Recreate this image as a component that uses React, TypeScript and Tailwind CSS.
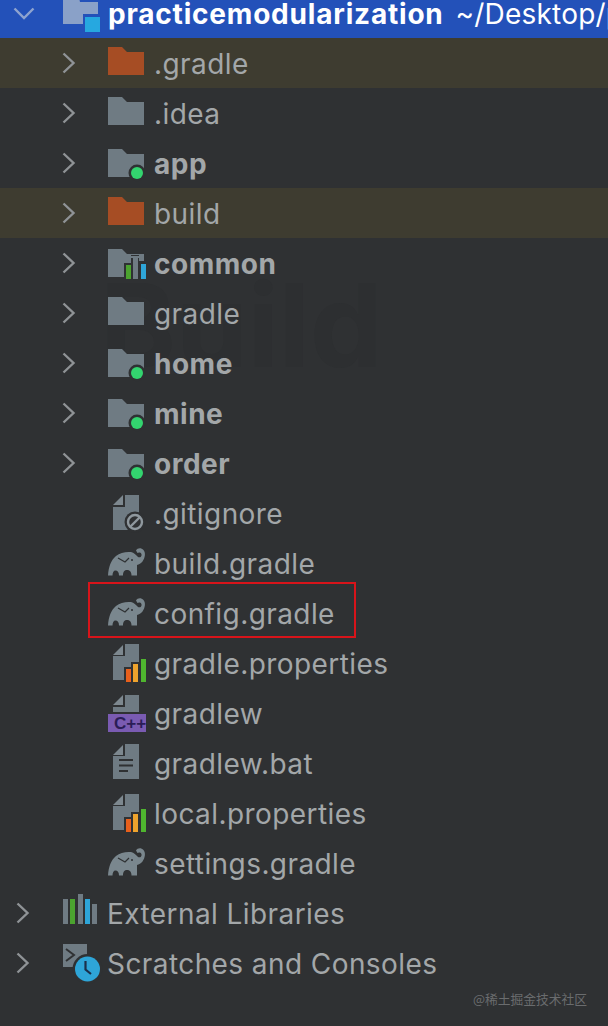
import React from "react";

const SLATE = "#6f7b83";
const BG = "#2f3133";

type Icon = React.ReactNode;

function Svg({ children }: { children: React.ReactNode }) {
  return (
    <svg width="40" height="40" viewBox="0 0 40 40" className="shrink-0 overflow-visible">
      {children}
    </svg>
  );
}

function folderPath(y: number) {
  return `M2 ${y}H16L21 ${y + 5}H38V${y + 28}H2Z`;
}

const ModuleDot = () => (
  <>
    <circle cx="31" cy="30" r="8.5" fill={BG} />
    <circle cx="31" cy="30" r="6" fill="#33d46f" />
  </>
);

const Folder = ({ color = SLATE }: { color?: string }) => (
  <Svg>
    <path d={folderPath(4)} fill={color} />
  </Svg>
);

const ModuleFolder = () => (
  <Svg>
    <path d={folderPath(6)} fill={SLATE} />
    <ModuleDot />
  </Svg>
);

const ChartFolder = () => (
  <Svg>
    <path d={folderPath(6)} fill={SLATE} />
    <path d="M18 38V20H25V12H33V18H41V38Z" fill={BG} />
    <path d="M25 13H33V15H25Z" fill={SLATE} />
    <rect x="20" y="22" width="5" height="14" fill="#4ba32f" />
    <rect x="27" y="15" width="5" height="21" fill={SLATE} />
    <rect x="35" y="21" width="5" height="15" fill="#2ea5d8" />
  </Svg>
);

const filePath = "M19 2H33V37H7V14H19Z";

const FileBase = ({ d = filePath }: { d?: string }) => (
  <>
    <path d="M7 12L17 2V12Z" fill="#7d888f" />
    <path d={d} fill={SLATE} />
  </>
);

const GitIgnore = () => (
  <Svg>
    <FileBase />
    <circle cx="29" cy="29" r="10.5" fill={BG} />
    <circle cx="29" cy="29" r="7" fill="none" stroke="#8f989e" strokeWidth="2.4" />
    <path d="M24.5 33.5L33.5 24.5" stroke="#8f989e" strokeWidth="2.4" />
  </Svg>
);

const Elephant = () => (
  <Svg>
    <path
      d="M2 32.500C2.500 24 5 17 10 13C14 9.500 20 8.500 25 9C28 9.500 30 12 31.500 13.500C33 15 35 14.500 35.500 12.500C36 10.500 34.500 9 33 9.500L31.500 10L30 7.500C31.500 5 35 4.500 37.500 7C40 10 39 15 36.500 18.500C35 20.500 33 21.500 31 22V32.500H25.500C25.500 28.500 23.500 27 21 27C18.500 27 17 28.500 17 32.500H13C13 29 11.500 27.500 9.500 27.500C7.500 27.500 6.500 29.500 6.500 32.500Z"
      fill="#7a878e"
    />
    <path d="M12 15L19 19L23 15" fill="none" stroke={BG} strokeWidth="1.2" />
    <circle cx="26" cy="17" r="1" fill={BG} />
  </Svg>
);

const Properties = () => (
  <Svg>
    <FileBase d="M19 1H33V37H7V13H19Z" />
    <path d="M18 41V24H25V19H33V14H41V41Z" fill={BG} />
    <rect x="20" y="26" width="5" height="13" fill="#e8601c" />
    <rect x="27" y="21" width="5" height="18" fill="#eea32d" />
    <rect x="35" y="16" width="5" height="23" fill="#4fb52f" />
  </Svg>
);

const CppFile = () => (
  <Svg>
    <path d="M7 12L17 2V12Z" fill="#7d888f" />
    <path d="M19 2H33V19H7V14H19Z" fill={SLATE} />
    <rect x="2" y="21" width="38" height="18" fill="#7a5bb2" />
    <text
      x="8"
      y="36"
      fontFamily="'Liberation Sans', sans-serif"
      fontWeight="700"
      fontSize="17"
      fill="#2a1d57"
    >
      C++
    </text>
  </Svg>
);

const TextFile = () => (
  <Svg>
    <FileBase d="M19 1H33V36H7V13H19Z" />
    <rect x="13" y="16" width="14" height="2" fill={BG} />
    <rect x="13" y="21.500" width="14" height="2" fill={BG} />
    <rect x="13" y="27" width="9" height="2" fill={BG} />
  </Svg>
);

const Libraries = () => (
  <Svg>
    <rect x="3" y="6" width="5" height="25" fill={SLATE} />
    <rect x="10" y="6" width="5" height="25" fill="#4ba32f" />
    <rect x="18" y="1" width="5" height="30" fill={SLATE} />
    <rect x="25" y="6" width="5" height="25" fill="#2ea5d8" />
    <rect x="32" y="11" width="5" height="20" fill={SLATE} />
  </Svg>
);

const Scratches = () => (
  <Svg>
    <rect x="3" y="1" width="24" height="23" fill={SLATE} />
    <path d="M6 6L14 12L6 18" fill="none" stroke={BG} strokeWidth="2" />
    <circle cx="27.500" cy="26" r="15" fill={BG} />
    <circle cx="27.500" cy="26" r="12.500" fill="#2ea5d8" />
    <path d="M25.500 18V26.500L31 31" fill="none" stroke="#1c2f4a" strokeWidth="2.200" />
  </Svg>
);

const Chevron = () => (
  <svg width="14" height="22" viewBox="0 0 14 22" className="shrink-0">
    <path d="M1.500 1.500L11.500 11L1.500 20.500" fill="none" stroke="#8f9396" strokeWidth="2.400" />
  </svg>
);

interface RowProps {
  icon: Icon;
  label: string;
  bold?: boolean;
  tinted?: boolean;
  hasChevron?: boolean;
  outer?: boolean;
  boxed?: boolean;
}

function Row({ icon, label, bold, tinted, hasChevron = true, outer, boxed }: RowProps) {
  return (
    <div
      className={`relative flex h-[50px] items-center ${outer ? "pl-[16px]" : "pl-[62px]"} ${
        tinted ? "bg-[#3e3c30]" : ""
      }`}
    >
      <div className="flex w-[44px] shrink-0 items-center">{hasChevron && <Chevron />}</div>
      {icon}
      <span
        className={`whitespace-nowrap pt-[2px] text-[28px] leading-none ${outer ? "ml-[7px]" : "ml-[8px]"} ${
          bold ? "font-bold tracking-[0.5px]" : "font-normal tracking-[0.42px]"
        }`}
      >
        {label}
      </span>
      {boxed && (
        <div className="absolute left-[88px] top-[-6px] h-[56px] w-[268px] border-2 border-[#d8141a]" />
      )}
    </div>
  );
}

export default function App() {
  return (
    <div className="relative h-[1026px] w-[608px] overflow-hidden bg-[#2f3133] font-['Inter',sans-serif] text-[#a3a7a9]">
      {/* ghost drag label left behind in the tree */}
      <span className="absolute left-[100px] top-[268px] whitespace-nowrap text-[115px] font-bold leading-none text-[#2d2f31]">
        Build
      </span>

      <div className="relative flex h-[38px] items-end overflow-hidden bg-[#2351b9] text-white">
        <div className="flex h-[50px] shrink-0 items-center whitespace-nowrap pl-[13px]">
          <svg width="22" height="13" viewBox="0 0 22 13" className="mr-[27px] shrink-0">
            <path d="M1.500 1.500L11 11L20.500 1.500" fill="none" stroke="#8ea3cf" strokeWidth="2.400" />
          </svg>
          <svg width="40" height="40" viewBox="0 0 40 40" className="mr-[6px] shrink-0 overflow-visible">
            <path d="M1 0H16L18 9H36V21H21V31H1Z" fill="#8aa1c8" />
            <rect x="23" y="24" width="15" height="15" fill="#26a8e0" />
          </svg>
          <span className="pt-[2px] text-[28px] font-bold leading-none tracking-[0.8px]">
            practicemodularization
          </span>
          <span className="ml-[12px] pt-[2px] text-[28px] leading-none tracking-[0.2px]">
            ~/Desktop/practice
          </span>
        </div>
      </div>

      <Row tinted icon={<Folder color="#a64d24" />} label=".gradle" />
      <Row icon={<Folder />} label=".idea" />
      <Row bold icon={<ModuleFolder />} label="app" />
      <Row tinted icon={<Folder color="#a64d24" />} label="build" />
      <Row bold icon={<ChartFolder />} label="common" />
      <Row icon={<Folder />} label="gradle" />
      <Row bold icon={<ModuleFolder />} label="home" />
      <Row bold icon={<ModuleFolder />} label="mine" />
      <Row bold icon={<ModuleFolder />} label="order" />
      <Row hasChevron={false} icon={<GitIgnore />} label=".gitignore" />
      <Row hasChevron={false} icon={<Elephant />} label="build.gradle" />
      <Row hasChevron={false} boxed icon={<Elephant />} label="config.gradle" />
      <Row hasChevron={false} icon={<Properties />} label="gradle.properties" />
      <Row hasChevron={false} icon={<CppFile />} label="gradlew" />
      <Row hasChevron={false} icon={<TextFile />} label="gradlew.bat" />
      <Row hasChevron={false} icon={<Properties />} label="local.properties" />
      <Row hasChevron={false} icon={<Elephant />} label="settings.gradle" />
      <Row outer icon={<Libraries />} label="External Libraries" />
      <Row outer icon={<Scratches />} label="Scratches and Consoles" />

      <span className="absolute left-[473px] top-[989px] whitespace-nowrap font-['Noto_Sans_CJK_SC',sans-serif] text-[12.75px] text-[#6a6c6e]">
        @稀土掘金技术社区
      </span>
    </div>
  );
}
